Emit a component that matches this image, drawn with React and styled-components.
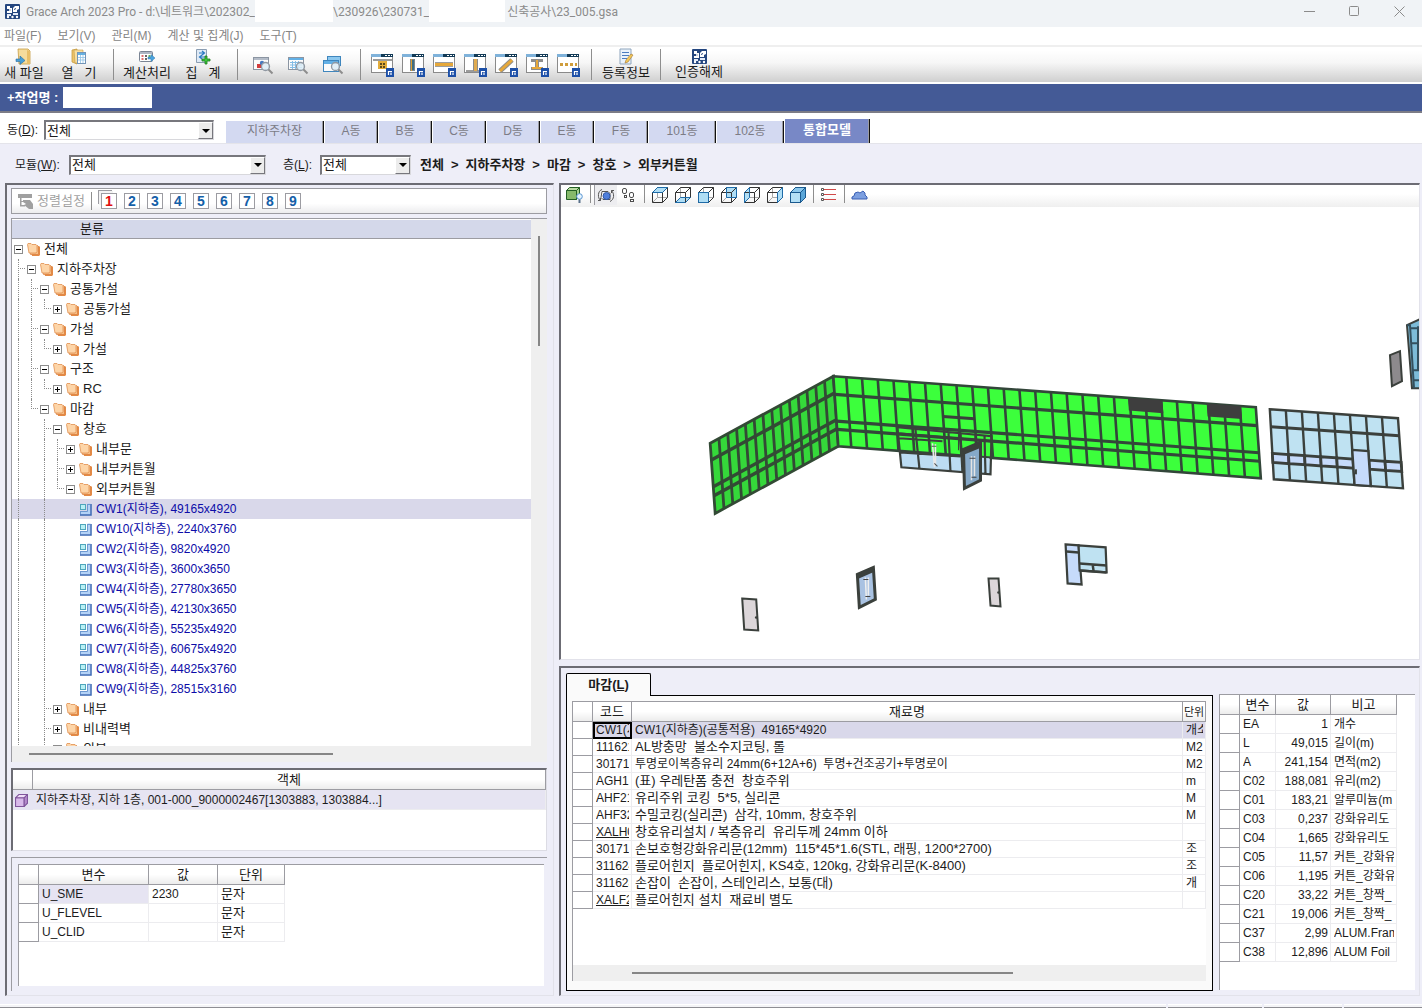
import React, { useState } from "react";
import styled, { createGlobalStyle, css } from "styled-components";

const c = {
  panel: "#eeeef8",
  line: "#9c9ca2",
  dark: "#6c6c74",
  navy: "#445a96",
  tab: "#d3d9f1",
  head: "#d4d8ea",
  select: "#d9d8ea",
  soft: "#e6e4f2",
};
const inset = css`
  border: 1px solid #e2e2ea;
  border-top: 2px solid ${c.dark};
  border-left: 2px solid ${c.dark};
`;

const Global = createGlobalStyle`
  *, *::before, *::after { box-sizing: border-box; }
  body { margin: 0; background: ${c.panel}; }
  body, button, input, select {
    font-family: "Liberation Sans", "Noto Sans CJK KR", sans-serif;
    font-size: 13px; line-height: 16px; color: #1c1c1c;
  }
  button { border: 0; padding: 0; background: none; cursor: pointer; }
  svg { display: block; flex: none; }
`;

const Page = styled.div`
  display: flex;
  flex-direction: column;
  height: 100vh;
  min-width: 1100px;
  overflow: hidden;
  background: ${c.panel};
`;
const TitleBar = styled.header`
  display: flex;
  align-items: center;
  height: 27px;
  padding-left: 5px;
  background: #f0f3f6;
  color: #8b8b8b;
  font-family: Roboto, "Noto Sans CJK KR", sans-serif;
  font-size: 12px;
  white-space: pre;
`;
const AppMark = styled.span`
  margin: 0 6px 4px 0;
`;
const TitleText = styled.span`
  min-width: ${(p) => p.$w}px;
  margin-bottom: 4px;
`;
const Blank = styled.span`
  align-self: flex-start;
  width: ${(p) => p.$w}px;
  height: 22px;
  margin-right: ${(p) => p.$gap || 0}px;
  background: #fff;
`;
const WindowButtons = styled.div`
  display: flex;
  margin: 0 0 4px auto;
`;
const WindowButton = styled.button`
  display: grid;
  place-items: center;
  width: 45px;
  height: 22px;
`;
const MenuBar = styled.nav`
  display: flex;
  align-items: center;
  gap: 16px;
  height: 20px;
  padding-left: 4px;
  background: #fff;
  border-bottom: 2px solid #efefef;
`;
const MenuButton = styled.button`
  color: #858585;
  font-size: 12px;
  white-space: pre;
`;
const ToolBar = styled.div`
  display: flex;
  align-items: center;
  height: 35px;
  background: linear-gradient(#fff 10%, #f6f6f6 45%, #cfcfcf);
`;
const ToolButton = styled.button`
  display: flex;
  flex-direction: column;
  align-items: center;
  justify-content: center;
  width: ${(p) => p.$w}px;
  white-space: pre;
`;
const Sep = styled.span`
  flex: none;
  width: 1px;
  height: ${(p) => p.$h || 31}px;
  margin: 0 ${(p) => p.$r}px 0 ${(p) => p.$l}px;
  background: #8e8e8e;
`;
const JobBar = styled.div`
  display: flex;
  align-items: center;
  height: 31px;
  padding-left: 7px;
  color: #fff;
  background: ${c.navy};
  border-top: 2px solid #fff;
  border-bottom: 2px solid #7c7c86;
  font-weight: bold;
`;
const JobInput = styled.input`
  width: 89px;
  height: 21px;
  border: 0;
  background: #fff;
`;
const JobLabel = styled.label`
  width: 56px;
  white-space: pre;
`;
const BuildingRow = styled.div`
  display: flex;
  align-items: flex-end;
  height: 31px;
  padding-left: 7px;
  background: #fff;
  border-bottom: 1px solid #e4e4ea;
`;
const FieldLabel = styled.label`
  width: ${(p) => p.$w}px;
  font-size: 12px;
  white-space: pre;
`;
const Field = styled.div`
  display: flex;
  align-items: center;
  margin-right: ${(p) => p.$r}px;
  margin-bottom: ${(p) => p.$b || 0}px;
`;
const SelectBox = styled.span`
  display: flex;
  width: ${(p) => p.$w}px;
  height: 20px;
  background: #fff;
  border: 1px solid #d8d8dc;
  border-top: 2px solid #77777d;
  border-left: 2px solid #77777d;
`;
const Select = styled.select`
  appearance: none;
  flex: 1;
  min-width: 0;
  padding: 0 1px;
  border: 0;
  background: transparent;
  outline: 0;
`;
const Arrow = styled.span`
  display: grid;
  place-items: center;
  width: 15px;
  background: #ececec;
  border: 1px solid #fff;
  border-right-color: #77777d;
  border-bottom-color: #77777d;
`;
const Tabs = styled.div`
  display: flex;
  align-items: flex-end;
  height: 24px;
`;
const Tab = styled.button`
  width: ${(p) => p.$w}px;
  height: ${(p) => (p.$on ? 24 : 22)}px;
  padding-bottom: 2px;
  color: ${(p) => (p.$on ? "#fff" : "#7c7c86")};
  font-size: ${(p) => (p.$on ? 13 : 12)}px;
  font-weight: ${(p) => (p.$on ? "bold" : "normal")};
  background: ${(p) => (p.$on ? "#7888c6" : c.tab)};
  border-left: 1px solid #fff;
  border-right: 1px solid #111;
  box-shadow: inset -1px 0 0 #9c9ca2;
`;
const FilterRow = styled.div`
  display: flex;
  align-items: center;
  height: 39px;
  padding: 2px 0 0 15px;
`;
const Crumbs = styled.div`
  display: flex;
  gap: 7px;
  font-weight: bold;
`;
const Main = styled.main`
  display: flex;
  flex: 1;
  min-height: 0;
  gap: 5px;
  padding: 0 2px 0 5px;
`;
const LeftPanel = styled.section`
  display: flex;
  flex-direction: column;
  gap: 4px;
  width: 549px;
  padding: 3px 6px 4px 4px;
  ${inset}
`;
const SortBar = styled.div`
  display: flex;
  align-items: center;
  flex: none;
  height: 26px;
  padding-left: 5px;
  background: linear-gradient(#fff 60%, #ececee);
  border: 1px solid ${c.line};
`;
const SortButton = styled.button`
  display: flex;
  align-items: center;
  gap: 3px;
  color: #a2a2a2;
`;
const Digits = styled.div`
  display: flex;
  gap: 7px;
`;
const Digit = styled.button`
  width: 16px;
  height: 16px;
  color: ${(p) => (p.$on ? "#e01010" : "#1460a8")};
  font-weight: bold;
  font-size: 14px;
  line-height: 14px;
  background: #fff;
  border: 1px solid #9c9ca2;
  box-shadow: ${(p) => (p.$on ? "-3px -3px 0 -1px #f3f3f3, -4px -4px 0 -1px #9c9ca2" : "none")};
`;
const TreeBox = styled.div`
  display: flex;
  flex: 1;
  min-height: 0;
  border-top: 1px solid ${c.line};
  border-left: 1px solid ${c.line};
`;
const TreeMain = styled.div`
  display: flex;
  flex-direction: column;
  flex: 1;
  min-width: 0;
  background: #fff;
`;
const TreeHead = styled.div`
  flex: none;
  height: 20px;
  padding: 1px 0 0 68px;
  background: ${c.head};
  border-top: 1px solid #fff;
  border-bottom: 1px solid ${c.line};
`;
const TreeList = styled.ul`
  flex: 1;
  min-height: 0;
  margin: 0;
  padding: 0;
  overflow: hidden;
  list-style: none;
`;
const TreeRow = styled.li`
  display: flex;
  align-items: center;
  height: 20px;
  font-size: ${(p) => (p.$leaf ? 12 : 13)}px;
  color: ${(p) => (p.$leaf ? "#0c0ca8" : "#1c1c1c")};
  background: ${(p) => (p.$on ? c.select : "transparent")};
`;
const Guide = styled.span`
  display: grid;
  grid-template-columns: 6px 7px;
  grid-template-rows: 10px 10px;
  width: 13px;
  height: 20px;
  &::before {
    content: "";
    grid-column: 2;
    grid-row: ${(p) => (p.$kind === "e" ? "1" : "1 / 3")};
    border-left: ${(p) => (p.$kind === "n" ? "0" : "1px dotted #8c8c8c")};
  }
  &::after {
    content: "";
    grid-column: 2;
    grid-row: 1;
    border-bottom: ${(p) => ("te".includes(p.$kind) ? "1px dotted #8c8c8c" : "0")};
  }
`;
const ToggleCell = styled.span`
  display: grid;
  place-items: center;
  width: 13px;
  margin-right: 2px;
`;
const Toggle = styled.button`
  display: grid;
  place-items: center;
  width: 9px;
  height: 9px;
  background: #fff;
  border: 1px solid #8c8c8c;
`;
const TreeLabel = styled.span`
  margin-left: 4px;
  white-space: pre;
`;
const VScroll = styled.div`
  width: 16px;
  padding: 17px 7px 0;
  background: #efefef;
`;
const VThumb = styled.div`
  width: 2px;
  height: 110px;
  background: #868686;
`;
const HScroll = styled.div`
  flex: none;
  display: flex;
  align-items: center;
  height: 16px;
  padding-left: ${(p) => p.$l}px;
  background: #efefef;
`;
const HThumb = styled.div`
  width: ${(p) => p.$w};
  height: 2px;
  background: #868686;
`;
const ObjectBox = styled.div`
  flex: none;
  height: 83px;
  margin-top: 2px;
  background: #fff;
  border: 1px solid #dcdce4;
  border-top: 2px solid ${c.dark};
  border-left: 2px solid ${c.dark};
`;
const VarFrame = styled.div`
  flex: none;
  height: 134px;
  margin-top: 2px;
  padding: 6px 3px 5px 6px;
  border-top: 1px solid ${c.line};
  border-left: 1px solid ${c.line};
`;
const GridBox = styled.div`
  display: flex;
  flex-direction: column;
  height: 100%;
  background: #fff;
  border-top: 1px solid ${c.line};
  border-left: 1px solid ${c.line};
`;
const Table = styled.table`
  width: ${(p) => p.$w || "100%"};
  table-layout: fixed;
  border-collapse: separate;
  border-spacing: 0;
`;
const Col = styled.col`
  width: ${(p) => (p.$w ? p.$w + "px" : "auto")};
`;
const Th = styled.th`
  height: 20px;
  padding: 0;
  overflow: hidden;
  font-size: ${(p) => (p.$s ? 11 : 13)}px;
  font-weight: normal;
  line-height: 18px;
  white-space: nowrap;
  background: linear-gradient(#fff 50%, #ececec);
  border-right: 1px solid ${c.line};
  border-bottom: 1px solid ${c.line};
`;
const Cell = styled.td`
  height: ${(p) => p.$h || 19}px;
  padding: 0 2px 0 3px;
  font-size: ${(p) => (p.$s ? 12 : 13)}px;
  text-align: ${(p) => (p.$right ? "right" : "left")};
  background: ${(p) => p.$bg || "transparent"};
  border-right: 1px solid #ececef;
  border-bottom: 1px solid #ececef;
  outline: ${(p) => (p.$focus ? "2px solid #000" : "none")};
  outline-offset: -2px;
`;
const Clip = styled.div`
  overflow: hidden;
  line-height: 16px;
  text-decoration: ${(p) => (p.$u ? "underline" : "none")};
  white-space: pre;
`;
const Td = ({ children, $u, ...rest }) => (
  <Cell {...rest}><Clip $u={$u}>{children}</Clip></Cell>
);
const RowHead = styled.td`
  padding: 0;
  background: #fff;
  border-right: 1px solid ${c.line};
  border-bottom: 1px solid ${c.line};
`;
const ObjectIcon = styled.td`
  height: 20px;
  padding: 0 0 0 2px;
  background: ${c.soft};
`;
const RightSide = styled.div`
  display: flex;
  flex-direction: column;
  gap: 6px;
  flex: 1;
  min-width: 0;
`;
const Viewport = styled.section`
  display: flex;
  flex-direction: column;
  flex: 1;
  min-height: 0;
  background: #fff;
  ${inset}
`;
const ViewBar = styled.div`
  display: flex;
  align-items: flex-start;
  flex: none;
  height: 22px;
  padding-left: 2px;
  background: linear-gradient(#fff 40%, #efefef);
`;
const ViewButton = styled.button`
  display: grid;
  place-items: center;
  width: 23px;
  height: 20px;
  background: ${(p) => (p.$on ? "#ededf0" : "none")};
  border-left: ${(p) => (p.$on ? "1px solid #9c9ca2" : "0")};
`;
const Scene = styled.svg`
  flex: 1;
  width: 100%;
  min-height: 0;
`;
const Bottom = styled.section`
  display: flex;
  gap: 6px;
  flex: none;
  height: 330px;
  padding: 5px 4px 4px 5px;
  ${inset}
`;
const Finish = styled.div`
  display: flex;
  flex-direction: column;
  flex: 1;
  min-width: 0;
`;
const FinishTab = styled.button`
  align-self: flex-start;
  flex: none;
  width: 85px;
  height: 23px;
  margin-bottom: -1px;
  z-index: 1;
  font-weight: bold;
  background: #fafafa;
  border: 1px solid #000;
  border-bottom: 0;
  border-radius: 2px 2px 0 0;
`;
const FinishBody = styled.div`
  flex: 1;
  min-height: 0;
  padding: 5px 6px 9px 5px;
  background: #fafafa;
  border: 1px solid #000;
`;
const Fill = styled.div`
  flex: 1;
  min-height: 0;
`;
const Quantities = styled.div`
  width: 196px;
  height: 296px;
  margin-top: 21px;
`;
const StatusBar = styled.footer`
  display: flex;
  gap: 2px;
  flex: none;
  height: 12px;
  padding-top: 8px;
`;
const StatusCell = styled.span`
  flex: ${(p) => p.$f};
  background: #f3f3f6;
  border-top: 1px solid #fff;
  border-bottom: 1px solid #8e8e94;
`;

/* ---------- icons ---------- */
const Logo = ({ s = 15 }) => (
  <svg width={s} height={s} viewBox="0 0 15 15">
    <rect width="15" height="15" rx="1" fill="#24467f" />
    <path d="M2 2h3v2h2v5H2V7h2V5H2z" fill="#fff" />
    <path d="M8 4l2-2h4v3l-2 1v2H8z" fill="#fff" />
    <path d="M2 10h4v2H2zM8 9h5v2H8z" fill="#e4ecfa" />
    <path d="M4.500 6h1M9 5.500l2-1" stroke="#24467f" />
    <circle cx="3" cy="13" r="1.200" fill="#fff" /><circle cx="7.500" cy="13" r="1.200" fill="#fff" /><circle cx="12" cy="13" r="1.200" fill="#fff" />
  </svg>
);
const NewFile = () => (
  <svg width="18" height="17" viewBox="0 0 18 17">
    <path d="M3 1h10l2 2v13H4z" fill="#f6dc9c" stroke="#c59c43" strokeWidth=".8" />
    <path d="M12 2l3 1v13h-3z" fill="#e9bf68" />
    <path d="M1 11h4V8l5 4.500-5 4v-3H1z" fill="#48a0d8" stroke="#2b6c9d" strokeWidth=".6" />
  </svg>
);
const OpenFile = () => (
  <svg width="18" height="17" viewBox="0 0 18 17">
    <path d="M2 2l5-1v15l-5-2z" fill="#edc46a" stroke="#c59c43" strokeWidth=".8" />
    <path d="M4 2h9v13H5z" fill="#f8dfa0" stroke="#c59c43" strokeWidth=".6" />
    <rect x="7.500" y="4.500" width="8" height="11" fill="#fff" stroke="#7395b8" />
    <path d="M8 5h7v2H8z" fill="#66b0e0" />
    <path d="M8 9.500h7M8 12h7M10.500 7v8M13 7v8" stroke="#8fc3e6" strokeWidth=".8" />
  </svg>
);
const Calc = () => (
  <svg width="18" height="17" viewBox="0 0 18 17">
    <rect x="1.500" y="3.500" width="13" height="10" rx="1" fill="#fff" stroke="#7a8494" />
    <path d="M2 4h12v2H2z" fill="#aeb6c3" />
    <path d="M3.500 8h2M3.500 11h2" stroke="#d04040" strokeWidth="1.600" /><path d="M7 8h2M7 11h2" stroke="#333" strokeWidth="1.600" /><path d="M10.500 8h2" stroke="#3aa03a" strokeWidth="1.600" />
    <path d="M10 9h3V6.500l4 3.500-4 3.500V11h-3z" fill="#4aa4e0" stroke="#2f75a8" strokeWidth=".5" />
  </svg>
);
const Sum = () => (
  <svg width="18" height="17" viewBox="0 0 18 17">
    <path d="M2.500 1.500h10v13h-10z" fill="#dfeaf6" stroke="#8a9db2" />
    <path d="M5 5h5M8 3l2.500 2L8 7M11 9H6M8 7L5.500 9 8 11" fill="none" stroke="#2878c0" strokeWidth="1.200" />
    <path d="M11 8h2v3h3v2h-3v3h-2v-3H8v-2h3z" fill="#3cc83c" stroke="#1d7a1d" strokeWidth=".8" />
  </svg>
);
const Lens = () => (
  <>
    <circle cx="13.500" cy="11.500" r="4" fill="#dcecf6" fillOpacity=".85" stroke="#9098a2" strokeWidth="1.300" />
    <path d="M16.500 14.500l4 4" stroke="#8d8d8d" strokeWidth="2" />
  </>
);
const Search = ({ kind }) => (
  <svg width="22" height="20" viewBox="0 0 22 20">
    {kind === 2 && <rect x="5.500" y="1.500" width="13" height="9" fill="#8cc8ef" stroke="#3f86bd" />}
    <rect x="1.500" y={kind === 2 ? 5.5 : 2.5} width="15" height={kind === 2 ? 11 : 12} fill="#fbfbfb" stroke={kind === 2 ? "#3f86bd" : "#8b95a2"} />
    <path d={kind === 2 ? "M2 6h14v3H2z" : "M2 3h14v2H2z"} fill={kind === 0 ? "#b4bcc8" : "#62b0e6"} />
    {kind === 0 && <><rect x="5" y="9" width="5" height="4" fill="#d23c3c" /><circle cx="10" cy="8" r="2.200" fill="#4579c0" /></>}
    {kind === 1 && <path d="M3 7.500h12M3 10h12M3 12.500h12M5.500 6v8M8.500 6v8M11.500 6v8" stroke="#84bde6" />}
    <Lens />
  </svg>
);
const shapes = [
  <><path d="M3 6h19v2H3z" fill="#9b9b9b" /><path d="M8 8h9v8H8z" fill="#e3ad3c" /><path d="M10 10h2v2h-2zM13 10h2v2h-2zM10 13h2v2h-2zM13 13h2v2h-2z" fill="#5b4a1e" /></>,
  <><path d="M9 6h5v12H9z" fill="#7d878e" /><path d="M10 6h1v12h-1z" fill="#e0a030" /><path d="M11 7h2v10h-2z" fill="#3d6e84" /></>,
  <><path d="M3 9h18v5H3z" fill="#9d9d9d" /><path d="M3 10h18v3H3z" fill="#e6a83a" /></>,
  <><path d="M3 17h18v2H3z" fill="#9b9b9b" /><path d="M10 6h5v12h-5z" fill="#8b8b8b" /><path d="M11 6h3v12h-3z" fill="#e0ab50" /></>,
  <><path d="M6 18L18 7" stroke="#8d8d8d" strokeWidth="5" /><path d="M6 18L18 7" stroke="#e6a83a" strokeWidth="3" /></>,
  <><path d="M6 6h12v3h-4v5h4v3H6v-3h4V9H6z" fill="#8d8d8d" /><path d="M11 7h2v8h-2zM7 14h10v2H7z" fill="#e6a83a" /></>,
  <path d="M4 11.500h17" stroke="#cf9d3c" strokeWidth="3" strokeDasharray="3 2" />,
];
const ShapeTool = ({ i }) => (
  <svg width="24" height="24" viewBox="0 0 24 24">
    <rect x="1.500" y="1.500" width="21" height="18" fill="#fff" stroke="#8a8a8a" />
    <path d="M1 1h22v3H1z" fill="#123a56" /><path d="M1 1h10v3H1z" fill="#7fb2da" />
    <path d="M15 2.500h2M18 2.500h2M21 2.500h1" stroke="#fff" />
    {shapes[i]}
    <path d="M16 15h8v9h-8z" fill="#1d50a8" /><path d="M18.500 22v-3.500H22M21 19.500v2.500" stroke="#fff" strokeWidth="1.200" fill="none" />
  </svg>
);
const Info = () => (
  <svg width="18" height="17" viewBox="0 0 18 17">
    <path d="M3 1h11v15H3z" fill="#e9f2fb" stroke="#8fa5bd" /><path d="M5 4.500h7M5 7.500h7M5 10.500h5" stroke="#4b7cc0" />
    <path d="M8 15l1-3 5-6 2 1-5 7z" fill="#f3c95a" stroke="#a5742c" strokeWidth=".6" />
  </svg>
);
const SortIcon = () => (
  <svg width="17" height="17" viewBox="0 0 17 17" fill="#a0a0a0">
    <path d="M1 1h14v4H1zM3 5h1.500v7H8v1.500H3zM4 8h4v1H4z" /><path d="M6 7h7l3 4v5h-4l-5-4 2-1-3-2z" />
  </svg>
);
const Folder = () => (
  <svg width="13" height="13" viewBox="0 0 13 13">
    <path d="M4 3h8l1 1v8l-1 1H5z" fill="#e48a45" />
    <path d="M2.500 2.500h8l1 1v7l-1 1h-7z" fill="#f6bd84" stroke="#d87c3c" strokeWidth=".7" />
    <path d="M.5 1.500L1 .5h3l1 1h4l1 1v6l-1 1.500H2z" fill="#fdd5a8" stroke="#e19150" strokeWidth=".8" />
  </svg>
);
const Leaf = () => (
  <svg width="13" height="13" viewBox="0 0 13 13">
    <rect x="1.500" y="1.500" width="5" height="5" fill="#b8f0f4" stroke="#4fa6bc" />
    <path d="M8.500.5h3v11H1.500V8.500h7z" fill="#b4d2f6" />
    <path d="M8.500 1v7.500H1M1.500 8v3.500M8 1.500h3" fill="none" stroke="#6d98d0" />
    <path d="M12 1v11H1" fill="none" stroke="#3b68b4" strokeWidth="1.500" />
  </svg>
);
const PurpleCube = () => (
  <svg width="13" height="13" viewBox=".5 .5 12 12" stroke="#80569c">
    <path d="M1 4h8v8H1z" fill="#d8b9ea" /><path d="M1 4l3-3h8L9 4z" fill="#f0def8" /><path d="M9 4l3-3v8l-3 3z" fill="#b48acb" />
  </svg>
);
const GreenCube = () => (
  <svg width="18" height="17" viewBox=".5 .5 18 17">
    <path d="M1 4h10v9H1z" fill="#86b96a" stroke="#235f23" /><path d="M1 4l3-3h10l-3 3z" fill="#b9dba2" stroke="#235f23" /><path d="M11 4l3-3v8l-3 4z" fill="#a5cf8e" stroke="#235f23" />
    <circle cx="14" cy="10" r="2.800" fill="#e6f4ff" stroke="#5996d2" /><path d="M14 13v3.500" stroke="#59708a" strokeWidth="2" />
  </svg>
);
const Orbit = () => (
  <svg width="18" height="17" viewBox="0 0 18 17" fill="none" stroke="#555">
    <path d="M5 2.500C.5 4 .5 11 3.500 13.500H1M3.500 13.500V11" /><path d="M13 14.500c4.500-2 4.500-8 1.500-11H17M14.500 3.500V6" />
    <path d="M5 4.500h6l2 2v6H6l-2-2z" fill="#fff" /><circle cx="9.500" cy="9" r="3.500" fill="#4f7fdc" stroke="#2f57a8" />
  </svg>
);
const Steps = () => (
  <svg width="16" height="17" viewBox="0 0 16 17" fill="#fff" stroke="#4c4c4c">
    <rect x="1.500" y="1.500" width="4" height="5" rx="1.500" /><rect x="3.500" y="8.500" width="2" height="2" /><rect x="8.500" y="5.500" width="4" height="5" rx="1.500" /><rect x="9.500" y="12.500" width="3" height="2" />
  </svg>
);
const faces = {
  top: "M1 6l5-5h10l-5 5z", bottom: "M1 16l5-5h10l-5 5z", front: "M1 6h10v10H1z", back: "M6 1h10v10H6z",
  left: "M1 6l5-5v10l-5 5z", right: "M11 6l5-5v10l-5 5z",
};
const Cube = ({ face }) => (
  <svg width="16" height="16" viewBox=".5 .5 16 16" fill="none" stroke="#333">
    {face === "all" ? (
      <><path d="M1 6h10v10H1z" fill="#b4e0f6" /><path d="M1 6l5-5h10l-5 5z" fill="#8cc9ee" /><path d="M11 6l5-5v10l-5 5z" fill="#5ba6d8" /></>
    ) : (
      <><path d="M6 1v10h10M6 11l-5 5" stroke="#a8a8a8" /><path d={faces[face]} fill="#b0def5" stroke="none" /></>
    )}
    <path d="M1 6h10v10H1zM1 6l5-5h10v10l-5 5M11 6l5-5" stroke={face === "all" ? "#1a5a90" : "#333"} />
    {face !== "all" && <path d={faces[face]} stroke="#1e6ba8" />}
  </svg>
);
const ListIcon = () => (
  <svg width="16" height="16" viewBox="0 0 16 16" stroke="#d04a4a" fill="#fff">
    <path d="M3 2.500h12M3 7.500h12M3 12.500h12" /><path d="M.5 1.500h2v2h-2zM.5 6.500h2v2h-2zM.5 11.500h2v2h-2z" stroke="#555" />
  </svg>
);
const Cloud = () => (
  <svg width="17" height="12" viewBox="0 0 17 12">
    <path d="M1 10V8l2-1 1-3 3-1 2 1 3-2 2 2v2l2 2v2z" fill="#7c9fe0" stroke="#3a5fb4" />
  </svg>
);

/* ---------- model drawing ---------- */
const FRAME = "#3b403c";
const at = (q, u, v) => {
  const [a, b, d, e] = q;
  return [0, 1].map((k) => (1 - v) * ((1 - u) * a[k] + u * b[k]) + v * ((1 - u) * e[k] + u * d[k]));
};
const poly = (q, u0, v0, u1, v1) =>
  [at(q, u0, v0), at(q, u1, v0), at(q, u1, v1), at(q, u0, v1)].map((p) => p.join(",")).join(" ");
const seg = (q, u0, v0, u1, v1) => `M${at(q, u0, v0)}L${at(q, u1, v1)}`;
const Wall = ({ q, cols, rows, fill, w = 2, edge = FRAME }) => (
  <g stroke={edge}>
    <polygon points={poly(q, 0, 0, 1, 1)} fill={fill} strokeWidth={w} />
    <path d={cols.map((u) => seg(q, u, 0, u, 1)).join("")} strokeWidth={w} fill="none" />
    <path d={rows.map((v) => seg(q, 0, v, 1, v)).join("")} strokeWidth={w + 0.6} fill="none" />
  </g>
);
const even = (n) => Array.from({ length: n - 1 }, (_, i) => (i + 1) / n);
const sideQ = [[710, 443], [833, 376], [838, 446], [715, 513]];
const mainQ = [[833, 376], [1255, 407], [1260, 478], [838, 446]];
const blueQ = [[1269, 409], [1397, 418], [1402, 488], [1273, 479]];
const mainCols = Array.from({ length: 26 }, (_, i) => (13 + i * 15.8) / 424);

const Model = () => (
  <Scene viewBox="561 207 857 451" preserveAspectRatio="xMinYMin meet" role="img" aria-label="3D">
    <Wall q={sideQ} cols={even(14)} rows={[0.24, 0.62, 0.75]} fill="#35d83a" w={2.8} edge="#334a35" />
    <Wall q={mainQ} cols={mainCols} rows={[0.26, 0.64, 0.76]} fill="#3cff3c" w={2.6} edge="#33463a" />
    <polygon points={poly(mainQ, mainCols[18] - 0.004, 0, mainCols[20] + 0.003, 0.18)} fill="#3e3e3e" />
    <polygon points={poly(mainQ, mainCols[23] - 0.004, 0, mainCols[25] + 0.003, 0.18)} fill="#3e3e3e" />
    <path d={seg(mainQ, mainCols[6], 0.46, mainCols[8], 0.46)} stroke={FRAME} strokeWidth="3" />
    <polygon points="899,452 989,458 990,474 901,467" fill="#bcdcf2" />
    <path d="M897 427L991 436L990 474L901 467ZM898 433L990 441M899 438L942 441M900 452L960 456M915 429L919 468M948 432L950 471M960 433L962 473M975 435L977 474M984 435L985 474" fill="none" stroke={FRAME} strokeWidth="2.200" />
    <path d="M958 428v22" stroke={FRAME} /><path d="M932 443l2 24M935 444v20" stroke="#e8e8e8" strokeWidth="1.600" /><path d="M931 446h5M934 463l3 3" stroke="#555" />
    <polygon points="963,449 980,442 980,480 964,488" fill="#86a9c8" stroke={FRAME} strokeWidth="3" />
    <path d="M963 452l17-7" stroke={FRAME} strokeWidth="5" />
    <path d="M971 456v24M974 456v20" stroke="#e4e4e4" strokeWidth="1.500" /><path d="M969 458h6M971 477h5" stroke="#444" />
    <Wall q={blueQ} cols={even(8)} rows={[0.25]} fill="#bfe2f2" w={2.4} />
    {[0, 1, 2, 3, 4, 6, 7].map((i) => (
      <polygon key={i} points={poly(blueQ, i / 8, 0.63, (i + 1) / 8, 0.76)} fill="#c6dbfb" stroke={FRAME} strokeWidth="2.800" />
    ))}
    <polygon points={poly(blueQ, 5 / 8, 0.5, 6 / 8, 1)} fill="#c6dbfb" stroke={FRAME} strokeWidth="2.400" />
    <path d="M1355 469v5" stroke={FRAME} strokeWidth="2" />
    <polygon points="742,598 756,599 758,630 744,629" fill="#dcd6d9" stroke={FRAME} strokeWidth="2" />
    <circle cx="756" cy="617" r="1.300" fill={FRAME} />
    <polygon points="988,578 998,578 1000,606 990,605" fill="#dcd6d9" stroke={FRAME} strokeWidth="2" />
    <circle cx="998" cy="592" r="1.300" fill={FRAME} />
    <polygon points="857,574 873,567 875,599 859,607" fill="#a9c2e2" stroke={FRAME} strokeWidth="3" />
    <path d="M857 576l16-7" stroke={FRAME} strokeWidth="5" />
    <path d="M865 577l1 22M868 577v18" stroke="#eee" strokeWidth="1.500" /><path d="M863 579h5M865 596h5" stroke="#444" />
    <polygon points="1065,544 1078,545 1081,584 1067,583" fill="#c6dbfb" stroke={FRAME} strokeWidth="2.200" />
    <polygon points="1078,545 1105,547 1106,572 1079,570" fill="#bfe2f2" stroke={FRAME} strokeWidth="2.200" />
    <path d="M1066 551l12 1M1079 563l27 2M1079 570l27 2M1092 564l1 7" stroke={FRAME} strokeWidth="2.500" />
    <polygon points="1389,355 1399,351 1401,381 1391,386" fill="#8d8a8d" stroke={FRAME} strokeWidth="2" />
    <path d="M1419 319L1406 325L1411 388H1419" fill="#7dbcd8" stroke={FRAME} strokeWidth="2" />
    <path d="M1406 325l3 0 4 63M1409 328h10M1410 343h9M1412 370h7M1412 380h7M1417 326v44" fill="none" stroke="#33505e" strokeWidth="2" />
  </Scene>
);

/* ---------- data ---------- */
const tree = [
  ["", "-", "전체"], ["t", "-", "지하주차장"], ["ft", "-", "공통가설"], ["ffe", "+", "공통가설"],
  ["ft", "-", "가설"], ["ffe", "+", "가설"], ["ft", "-", "구조"], ["ffe", "+", "RC"],
  ["fe", "-", "마감"], ["fnt", "-", "창호"], ["fnft", "+", "내부문"], ["fnft", "+", "내부커튼월"], ["fnfe", "-", "외부커튼월"],
  ["fnfn", "", "CW1(지하층), 49165x4920"], ["fnfn", "", "CW10(지하층), 2240x3760"], ["fnfn", "", "CW2(지하층), 9820x4920"],
  ["fnfn", "", "CW3(지하층), 3600x3650"], ["fnfn", "", "CW4(지하층), 27780x3650"], ["fnfn", "", "CW5(지하층), 42130x3650"],
  ["fnfn", "", "CW6(지하층), 55235x4920"], ["fnfn", "", "CW7(지하층), 60675x4920"], ["fnfn", "", "CW8(지하층), 44825x3760"],
  ["fnfn", "", "CW9(지하층), 28515x3160"], ["fnt", "+", "내부"], ["fnt", "+", "비내력벽"], ["fnt", "-", "외부"],
];
const materials = [
  ["CW1(지하층)", "CW1(지하층)(공통적용)  49165*4920", "개소", 1],
  ["111621", "AL방충망  불소수지코팅, 롤", "M2"],
  ["301717", "투명로이복층유리 24mm(6+12A+6)  투명+건조공기+투명로이", "M2", 1],
  ["AGH12", "(표) 우레탄폼 충전  창호주위", "m"],
  ["AHF21", "유리주위 코킹  5*5, 실리콘", "M"],
  ["AHF32", "수밀코킹(실리콘)  삼각, 10mm, 창호주위", "M"],
  ["XALH0", "창호유리설치 / 복층유리  유리두께 24mm 이하", ""],
  ["301716", "손보호형강화유리문(12mm)  115*45*1.6(STL, 래핑, 1200*2700)", "조"],
  ["311624", "플로어힌지  플로어힌지, KS4호, 120kg, 강화유리문(K-8400)", "조"],
  ["311628", "손잡이  손잡이, 스테인리스, 보통(대)", "개"],
  ["XALF2", "플로어힌지 설치  재료비 별도", ""],
];
const quantities = [
  ["EA", "1", "개수"], ["L", "49,015", "길이(m)"], ["A", "241,154", "면적(m2)"], ["C02", "188,081", "유리(m2)"],
  ["C01", "183,21", "알루미늄(m"], ["C03", "0,237", "강화유리도"], ["C04", "1,665", "강화유리도"],
  ["C05", "11,57", "커튼_강화유"], ["C06", "1,195", "커튼_강화유"], ["C20", "33,22", "커튼_창짝_"],
  ["C21", "19,006", "커튼_창짝_"], ["C37", "2,99", "ALUM.Fram"], ["C38", "12,896", "ALUM Foil"],
];
const buildings = [
  ["지하주차장", 99], ["A동", 54], ["B동", 54], ["C동", 54], ["D동", 54], ["E동", 54], ["F동", 54], ["101동", 68], ["102동", 68], ["통합모델", 86],
];

const Drop = ({ id, label, mark, lw, w, r, b }) => (
  <Field $r={r} $b={b}>
    <FieldLabel htmlFor={id} $w={lw}>{label}(<u>{mark}</u>):</FieldLabel>
    <SelectBox $w={w}>
      <Select id={id} defaultValue="전체"><option>전체</option></Select>
      <Arrow aria-hidden="true">
        <svg width="8" height="4" viewBox="0 0 8 4"><path d="M0 0h8L4 4z" fill="#000" /></svg>
      </Arrow>
    </SelectBox>
  </Field>
);

export default function App() {
  const [building, setBuilding] = useState("통합모델");
  const [level, setLevel] = useState(1);
  const [picked, setPicked] = useState(13);
  return (
    <Page>
      <Global />
      <TitleBar>
        <AppMark><Logo /></AppMark>
        <TitleText $w={229}>{"Grace Arch 2023 Pro - d:\\네트워크\\202302_"}</TitleText>
        <Blank $w={78} />
        <TitleText $w={89}>{"\\230926\\230731_"}</TitleText>
        <Blank $w={76} $gap={2} />
        <TitleText>{"신축공사\\23_005.gsa"}</TitleText>
        <WindowButtons>
          <WindowButton aria-label="최소화"><svg width="11" height="11"><path d="M0 5.500h11" stroke="#8b8b8b" /></svg></WindowButton>
          <WindowButton aria-label="최대화"><svg width="11" height="11"><rect x=".5" y=".5" width="9" height="9" rx="1" fill="none" stroke="#8b8b8b" /></svg></WindowButton>
          <WindowButton aria-label="닫기"><svg width="11" height="11"><path d="M.5.5l10 10M10.500.5l-10 10" stroke="#8b8b8b" /></svg></WindowButton>
        </WindowButtons>
      </TitleBar>
      <MenuBar>
        {["파일(F)", "보기(V)", "관리(M)", "계산 및 집계(J)", "도구(T)"].map((m) => <MenuButton key={m}>{m}</MenuButton>)}
      </MenuBar>
      <ToolBar>
        <ToolButton $w={48}><NewFile />새 파일</ToolButton>
        <ToolButton $w={62}><OpenFile />{"열   기"}</ToolButton>
        <Sep $l={3} $r={0} />
        <ToolButton $w={66}><Calc />계산처리</ToolButton>
        <ToolButton $w={46}><Sum />{"집   계"}</ToolButton>
        <Sep $l={11} $r={7} />
        {[0, 1, 2].map((i) => <ToolButton key={i} $w={35} aria-label={"검색 " + (i + 1)}><Search kind={i} /></ToolButton>)}
        <Sep $l={10} $r={5} />
        {shapes.map((_, i) => <ToolButton key={i} $w={31} aria-label={"부재 " + (i + 1)}><ShapeTool i={i} /></ToolButton>)}
        <Sep $l={8} $r={2} />
        <ToolButton $w={64}><Info />등록정보</ToolButton>
        <Sep $l={2} $r={2} />
        <ToolButton $w={72}><Logo />인증해제</ToolButton>
      </ToolBar>
      <JobBar>
        <JobLabel htmlFor="job">+작업명 :</JobLabel>
        <JobInput id="job" />
      </JobBar>
      <BuildingRow>
        <Drop id="dong" label="동" mark="D" lw={37} w={170} r={11} b={3} />
        <Tabs role="tablist">
          {buildings.map(([name, w]) => (
            <Tab key={name} role="tab" aria-selected={building === name} $w={w} $on={building === name} onClick={() => setBuilding(name)}>{name}</Tab>
          ))}
        </Tabs>
      </BuildingRow>
      <FilterRow>
        <Drop id="module" label="모듈" mark="W" lw={54} w={197} r={17} />
        <Drop id="floor" label="층" mark="L" lw={37} w={91} r={9} />
        <Crumbs>
          <span>전체</span><span>&gt;</span><span>지하주차장</span><span>&gt;</span><span>마감</span><span>&gt;</span><span>창호</span><span>&gt;</span><span>외부커튼월</span>
        </Crumbs>
      </FilterRow>
      <Main>
        <LeftPanel>
          <SortBar>
            <SortButton disabled><SortIcon />정렬설정</SortButton>
            <Sep $l={6} $r={9} $h={18} />
            <Digits>
              {[1, 2, 3, 4, 5, 6, 7, 8, 9].map((n) => <Digit key={n} $on={level === n} onClick={() => setLevel(n)}>{n}</Digit>)}
            </Digits>
          </SortBar>
          <TreeBox>
            <TreeMain>
              <TreeHead>분류</TreeHead>
              <TreeList>
                {tree.map(([guides, mark, label], i) => (
                  <TreeRow key={i} $leaf={!mark} $on={picked === i} onClick={() => setPicked(i)}>
                    {[...guides].map((k, g) => <Guide key={g} $kind={k} />)}
                    {mark ? (
                      <ToggleCell>
                        <Toggle aria-label={mark === "+" ? "펼치기" : "접기"}>
                          <svg width="5" height="5"><path d={mark === "+" ? "M0 2.500h5M2.500 0v5" : "M0 2.500h5"} stroke="#000" /></svg>
                        </Toggle>
                      </ToggleCell>
                    ) : <ToggleCell />}
                    {mark ? <Folder /> : <Leaf />}
                    <TreeLabel>{label}</TreeLabel>
                  </TreeRow>
                ))}
              </TreeList>
              <HScroll $l={17}><HThumb $w="304px" /></HScroll>
            </TreeMain>
            <VScroll><VThumb /></VScroll>
          </TreeBox>
          <ObjectBox>
            <Table>
              <colgroup><Col $w={20} /><Col /></colgroup>
              <thead><tr><Th /><Th>객체</Th></tr></thead>
              <tbody>
                <tr><ObjectIcon><PurpleCube /></ObjectIcon><Td $h={20} $s $bg={c.soft}>지하주차장, 지하 1층, 001-000_9000002467[1303883, 1303884...]</Td></tr>
              </tbody>
            </Table>
          </ObjectBox>
          <VarFrame>
            <GridBox>
              <Table $w="266px">
                <colgroup><Col $w={20} /><Col $w={110} /><Col $w={69} /><Col $w={67} /></colgroup>
                <thead><tr><Th /><Th>변수</Th><Th>값</Th><Th>단위</Th></tr></thead>
                <tbody>
                  {[["U_SME", "2230"], ["U_FLEVEL", ""], ["U_CLID", ""]].map(([k, v], i) => (
                    <tr key={k}><RowHead /><Td $s $bg={i === 0 ? c.soft : ""}>{k}</Td><Td $s>{v}</Td><Td>문자</Td></tr>
                  ))}
                </tbody>
              </Table>
            </GridBox>
          </VarFrame>
        </LeftPanel>
        <RightSide>
          <Viewport>
            <ViewBar>
              <ViewButton aria-label="모델"><GreenCube /></ViewButton>
              <Sep $l={4} $r={3} $h={18} />
              <ViewButton $on aria-label="회전"><Orbit /></ViewButton>
              <ViewButton aria-label="보행"><Steps /></ViewButton>
              <Sep $l={4} $r={3} $h={18} />
              {["top", "bottom", "front", "back", "left", "right", "all"].map((f) => <ViewButton key={f} aria-label={f}><Cube face={f} /></ViewButton>)}
              <Sep $l={4} $r={3} $h={18} />
              <ViewButton aria-label="목록"><ListIcon /></ViewButton>
              <Sep $l={4} $r={3} $h={18} />
              <ViewButton aria-label="구름"><Cloud /></ViewButton>
            </ViewBar>
            <Model />
          </Viewport>
          <Bottom>
            <Finish>
              <FinishTab>마감(<u>L</u>)</FinishTab>
              <FinishBody>
                <GridBox>
                  <Fill>
                    <Table>
                      <colgroup><Col $w={20} /><Col $w={39} /><Col /><Col $w={23} /></colgroup>
                      <thead><tr><Th /><Th>코드</Th><Th>재료명</Th><Th $s>단위</Th></tr></thead>
                      <tbody>
                        {materials.map(([code, name, unit, small], i) => {
                          const bg = i === 0 ? c.select : "";
                          return (
                            <tr key={code}>
                              <RowHead />
                              <Td $h={17} $s $bg={bg} $focus={i === 0} $u={code.startsWith("X")}>{code}</Td>
                              <Td $h={17} $s={small} $bg={bg}>{name}</Td>
                              <Td $h={17} $s $bg={bg}>{unit}</Td>
                            </tr>
                          );
                        })}
                      </tbody>
                    </Table>
                  </Fill>
                  <HScroll $l={59}><HThumb $w="381px" /></HScroll>
                </GridBox>
              </FinishBody>
            </Finish>
            <Quantities>
              <GridBox>
                <Table $w="177px">
                  <colgroup><Col $w={20} /><Col $w={36} /><Col $w={55} /><Col $w={66} /></colgroup>
                  <thead><tr><Th /><Th>변수</Th><Th>값</Th><Th>비고</Th></tr></thead>
                  <tbody>
                    {quantities.map(([k, v, note]) => (
                      <tr key={k}><RowHead /><Td $s>{k}</Td><Td $s $right>{v}</Td><Td $s>{note}</Td></tr>
                    ))}
                  </tbody>
                </Table>
              </GridBox>
            </Quantities>
          </Bottom>
        </RightSide>
      </Main>
      <StatusBar>
        <StatusCell $f={1164} /><StatusCell $f={94} /><StatusCell $f={78} /><StatusCell $f={78} />
      </StatusBar>
    </Page>
  );
}
